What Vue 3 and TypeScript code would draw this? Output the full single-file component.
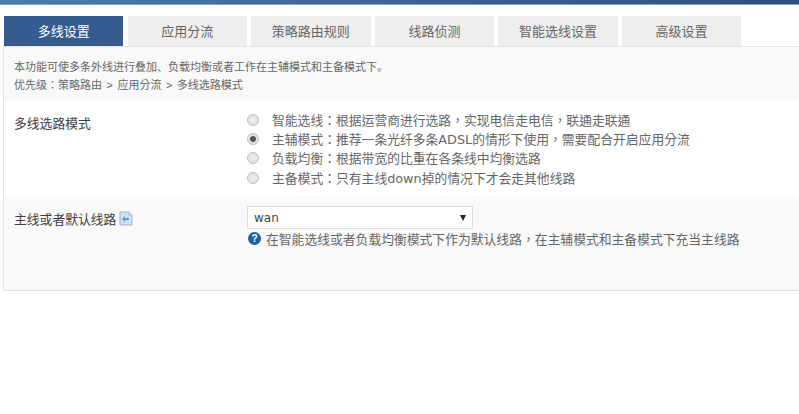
<script setup lang="ts">
const tabs: string[] = ['多线设置', '应用分流', '策略路由规则', '线路侦测', '智能选线设置', '高级设置']
const modes = [
  { text: '智能选线：根据运营商进行选路，实现电信走电信，联通走联通', checked: false },
  { text: '主辅模式：推荐一条光纤多条ADSL的情形下使用，需要配合开启应用分流', checked: true },
  { text: '负载均衡：根据带宽的比重在各条线中均衡选路', checked: false },
  { text: '主备模式：只有主线down掉的情况下才会走其他线路', checked: false },
]
</script>

<template>
  <div class="page">
    <div class="topbar"></div>
    <ul class="tabs">
      <li v-for="(t, i) in tabs" :key="t" class="tab" :class="{ active: i === 0 }">{{ t }}</li>
    </ul>
    <div class="panel">
      <div class="notice">
        <p>本功能可使多条外线进行叠加、负载均衡或者工作在主辅模式和主备模式下。</p>
        <p class="path">优先级：策略路由<span class="sep">&gt;</span>应用分流<span class="sep">&gt;</span>多线选路模式</p>
      </div>
      <div class="row white">
        <div class="label mode-label">多线选路模式</div>
        <div class="field">
          <label v-for="m in modes" :key="m.text" class="mode">
            <input type="radio" name="mode" :checked="m.checked" />
            <span>{{ m.text }}</span>
          </label>
        </div>
      </div>
      <div class="row gray">
        <div class="label line-label">
          主线或者默认线路
          <svg class="back" width="14" height="15" viewBox="0 0 14 15">
            <path d="M1 1h9l3 3v10H1z" fill="#cfe2f3" stroke="#a3b4c6" />
            <path d="M10 1v3h3" fill="#eef5fb" stroke="#a3b4c6" />
            <path d="M3 8l3-3v2h4v2H6v2z" fill="#5b9bd5" />
          </svg>
        </div>
        <div class="field">
          <div class="select-wrap">
            <select>
              <option>wan</option>
            </select>
            <span class="arrow"></span>
          </div>
          <div class="help">
            <svg width="13" height="13" viewBox="0 0 14 14">
              <circle cx="7" cy="7" r="7" fill="#1d5fa3" />
              <text x="7" y="11" text-anchor="middle" class="q">?</text>
            </svg>
            <span>在智能选线或者负载均衡模式下作为默认线路，在主辅模式和主备模式下充当主线路</span>
          </div>
        </div>
      </div>
    </div>
  </div>
</template>

<style scoped>
.page {
  width: 799px;
  height: 414px;
  background: #fff;
  overflow: hidden;
  font-family: "Noto Sans CJK SC", "Liberation Sans", sans-serif;
  font-size: 12px;
  color: #555;
}
.topbar {
  height: 5px;
  background: linear-gradient(90deg, #4a7cac, #3a6496 50%, #2f4d7e);
  border-bottom: 1px solid #8aa6c4;
  box-sizing: border-box;
}
.tabs {
  list-style: none;
  display: flex;
  gap: 4.2px;
  margin: 11px 0 0;
  padding: 0 0 0 4px;
}
.tab {
  width: 119.4px;
  height: 30px;
  line-height: 30px;
  text-align: center;
  background: #eee;
  color: #666;
  font-size: 13px;
}
.tab.active {
  background: #365b8e;
  color: #fff;
}
.panel {
  margin-left: 3px;
  height: 245px;
  box-sizing: border-box;
  border-left: 1px solid #e4e4e4;
  border-top: 1px solid #e4e4e4;
  border-bottom: 1px solid #e0e0e0;
  display: flex;
  flex-direction: column;
}
.notice {
  height: 54px;
  box-sizing: border-box;
  padding: 10px 0 0 10px;
  background: #f9f9f9;
  font-size: 11px;
  color: #666;
}
.notice p {
  margin: 0;
  line-height: 18px;
  height: 18px;
}
.path {
  font-family: "Noto Sans CJK TC", "Liberation Sans", sans-serif;
}
.sep {
  margin: 0 4.5px;
  font-family: "Liberation Sans", sans-serif;
}
.row {
  display: flex;
}
.white {
  background: #fff;
  height: 96px;
  padding-top: 9px;
  box-sizing: border-box;
}
.gray {
  background: #f9f9f9;
  flex: 1;
  padding-top: 9px;
}
.label {
  width: 243px;
  padding-left: 10px;
  box-sizing: border-box;
  color: #3d3d3d;
  font-size: 12.8px;
}
.mode-label {
  line-height: 20px;
  padding-top: 3px;
}
.line-label {
  display: flex;
  align-items: center;
  gap: 3px;
  height: 24px;
}
.field {
  display: flex;
  flex-direction: column;
}
.mode {
  display: flex;
  align-items: center;
  height: 19.2px;
  color: #666;
  font-family: "DejaVu Sans", "Noto Sans CJK TC", sans-serif;
  font-size: 12.8px;
}
.mode input {
  appearance: none;
  width: 12px;
  height: 12px;
  margin: 1px 13px 0 0;
  border-radius: 50%;
  border: 1px solid #bbb;
  background: radial-gradient(circle, #eee, #ddd);
  box-sizing: border-box;
  flex: none;
}
.mode input:checked {
  background: radial-gradient(circle, #555 0 2.5px, #e4e4e4 3.5px);
}
.select-wrap {
  position: relative;
  width: 226px;
  height: 23px;
}
.select-wrap select {
  appearance: none;
  width: 100%;
  height: 100%;
  border: 1px solid #ddd;
  background: #fff;
  padding: 0 0 0 6px;
  font-family: "DejaVu Sans", sans-serif;
  font-size: 12px;
  color: #444;
  outline: none;
}
.arrow {
  position: absolute;
  right: 7px;
  top: 9px;
  width: 0;
  height: 0;
  border-left: 3.5px solid transparent;
  border-right: 3.5px solid transparent;
  border-top: 6px solid #222;
}
.help {
  display: flex;
  align-items: center;
  gap: 5px;
  height: 19px;
  color: #666;
  padding-left: 1px;
  font-family: "Noto Sans CJK TC", "Liberation Sans", sans-serif;
  font-size: 12.8px;
}
.q {
  fill: #fff;
  font-family: "Liberation Sans", sans-serif;
  font-size: 11px;
  font-weight: 700;
}
</style>
